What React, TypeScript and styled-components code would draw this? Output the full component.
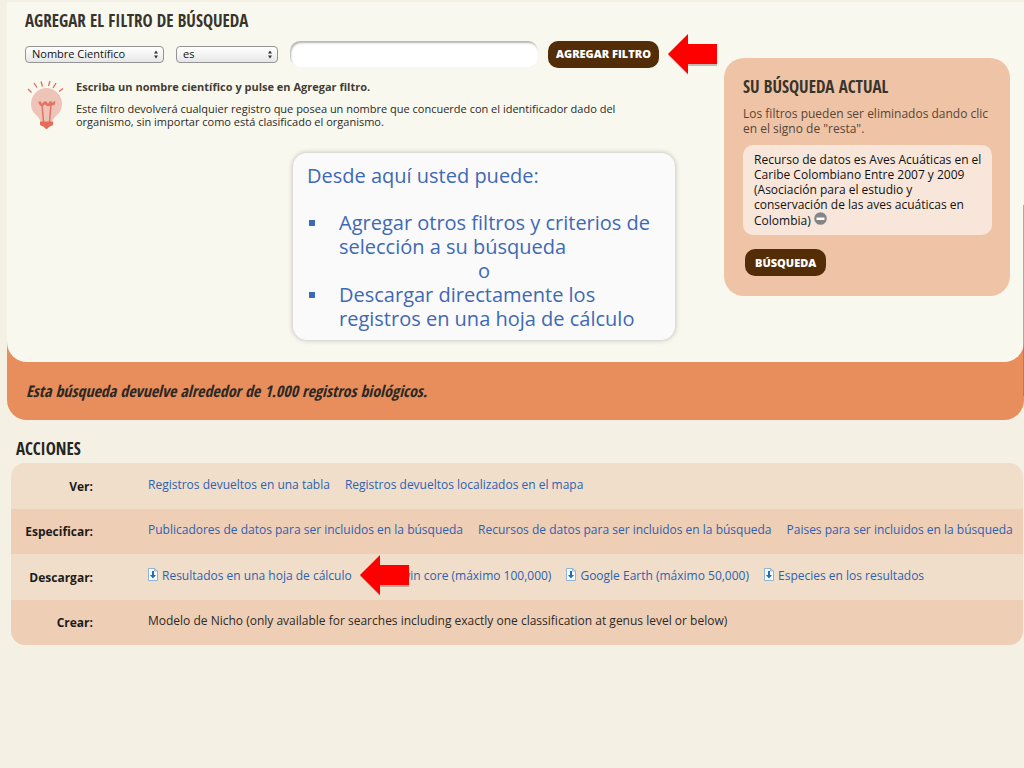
import React from 'react';
import styled, { createGlobalStyle } from 'styled-components';

const GlobalStyle = createGlobalStyle`
  * { box-sizing: border-box; }
  html { min-height: 100%; background: #f4f0e4; }
  body {
    margin: 0;
    font-family: "Open Sans", "Noto Sans", sans-serif;
    font-size: 12px;
    line-height: 15px;
    color: #2b2a26;
    overflow-x: hidden;
  }
  h1, h2, p, ul { margin: 0; padding: 0; }
`;

const condensed = `"Open Sans Condensed", "Roboto Condensed", sans-serif`;

const Page = styled.div`
  position: relative;
  padding: 2px 0 24px;
`;

const SearchBlock = styled.section`
  margin-left: 7px;
  background: #e78e5c;
  border-radius: 0 0 20px 20px;
`;

const FilterPanel = styled.div`
  display: flex;
  align-items: flex-start;
  gap: 20px;
  padding: 6px 14px 22px 18px;
  background: #f9f8ef;
  border-radius: 0 0 20px 20px;
`;

const FilterColumn = styled.div`
  flex: 1;
  min-width: 0;
`;

const Heading = styled.h2`
  font-family: ${condensed};
  font-size: 17px;
  font-weight: 300;
  line-height: 26px;
  color: #37342c;
  white-space: nowrap;
`;

const FilterForm = styled.form`
  display: flex;
  align-items: center;
  gap: 12px;
  height: 28px;
  margin-top: 6px;
`;

const SelectBox = styled.span<{ $width: number }>`
  display: grid;
  flex: none;
  align-items: center;
  width: ${(p) => p.$width}px;
  > * { grid-area: 1 / 1; }
  > svg { justify-self: end; margin-right: 5px; pointer-events: none; }
`;

const Select = styled.select`
  appearance: none;
  width: 100%;
  height: 17px;
  padding: 0 16px 0 6px;
  border: 1px solid #949494;
  border-radius: 4px;
  background: linear-gradient(#ffffff, #f4f4f4 50%, #e6e6e6);
  font: 500 11px/14px "Open Sans", sans-serif;
  color: #111;
`;

const ValueInput = styled.input`
  flex: none;
  width: 248px;
  height: 26px;
  padding: 0 10px;
  border: 0;
  border-radius: 10px;
  background: #fff;
  box-shadow: inset 1px 2px 2px #b5b5b0;
  font: inherit;
`;

const FormActions = styled.div`
  display: flex;
  flex: none;
  align-items: center;
  gap: 8px;
  margin-left: -2px;
`;

const DarkButton = styled.button`
  height: 27px;
  padding: 0 8px;
  border: 0;
  border-radius: 10px;
  background: #522d07;
  color: #fff;
  font: 800 11px/26px "Open Sans", sans-serif;
  white-space: nowrap;
`;

const Tip = styled.div`
  display: flex;
  gap: 11px;
  margin-top: 12px;
  > svg { flex: none; }
`;

const TipTitle = styled.p`
  font-size: 11px;
  font-weight: 700;
  line-height: 14px;
  color: #443d33;
`;

const TipText = styled.p`
  max-width: 560px;
  margin-top: 8px;
  font-size: 11px;
  line-height: 13px;
`;

const Callout = styled.aside`
  width: 382px;
  margin: 23px 0 0 268px;
  padding: 11px 14px 9px;
  border-radius: 14px;
  background: #fafafa;
  box-shadow: 0 0 4px 1px #c9c9c1;
  color: #3e69b4;
  font-size: 20px;
  line-height: 24px;
`;

const CalloutList = styled.ul`
  margin-top: 23px;
  list-style: none;
`;

const CalloutItem = styled.li`
  display: flex;
  align-items: flex-start;
  gap: 24px;
  &::before {
    content: "";
    flex: none;
    width: 6px;
    height: 6px;
    margin: 9px 0 0 2px;
    background: #3e69b4;
  }
`;

const CalloutOr = styled.li`
  text-align: center;
`;

const CurrentSearch = styled.aside`
  flex: none;
  width: 286px;
  margin-top: 50px;
  padding: 16px 18px 20px 19px;
  border-radius: 20px;
  background: #efc3a5;
`;

const CurrentText = styled.p`
  margin-top: 6px;
  color: #574537;
`;

const FilterChip = styled.div`
  margin-top: 9px;
  padding: 7px 8px 7px 11px;
  border-radius: 10px;
  background: #f8e6da;
  color: #111;
`;

const RemoveButton = styled.button`
  display: inline-block;
  width: 13px;
  height: 13px;
  padding: 0;
  border: 0;
  background: none;
  vertical-align: 0;
  svg { display: block; }
`;

const SearchButton = styled(DarkButton)`
  margin: 14px 0 0 2px;
  padding: 0 10px;
`;

const ResultLine = styled.p`
  padding: 14px 19px;
  font-family: ${condensed};
  font-size: 16px;
  font-weight: 300;
  font-style: italic;
  line-height: 30px;
  color: #2b2824;
`;

const ActionsHeading = styled(Heading)`
  margin: 16px 0 1px 16px;
  color: #26241f;
`;

const ActionsFrame = styled.div`
  margin: 0 1px 0 11px;
  border-radius: 14px;
  overflow: hidden;
`;

const ActionsTable = styled.table`
  width: 100%;
  border-collapse: collapse;
`;

const ActionRow = styled.tr`
  height: 46px;
  background: #f0decb;
  &:nth-child(even) { height: 45px; background: #efceb6; }
`;

const ActionName = styled.th`
  width: 82px;
  padding: 0;
  text-align: right;
  font-weight: 700;
  color: #1d1b18;
`;

const ActionCell = styled.td`
  padding: 0 0 4px 55px;
`;

const ActionLinks = styled.div`
  display: flex;
  gap: 15px;
  white-space: nowrap;
`;

const ActionItem = styled.span`
  position: relative;
  display: flex;
  gap: 3px;
  > svg { flex: none; }
`;

const Link = styled.a`
  color: #2d62ad;
  text-decoration: none;
`;

const ArrowOverlay = styled.span`
  position: absolute;
  left: 100%;
  top: -15px;
  margin-left: 7px;
  z-index: 1;
`;

const ScrollThumb = styled.div`
  position: absolute;
  top: 205px;
  right: 0;
  width: 1px;
  height: 191px;
  background: #77777799;
`;

const RedArrow = () => (
  <svg width="52" height="44" viewBox="0 0 52 44" display="block" aria-hidden="true">
    <path d="M1 23 21 4v10h29v20H21v9Z" fill="#4d2a20" opacity=".3" />
    <path d="M1 22 21 2v10h29v20H21v10Z" fill="#fe0000" />
  </svg>
);

const Stepper = () => (
  <svg width="6" height="9" viewBox="0 0 6 9" aria-hidden="true">
    <path d="M3 .5 5 3.500H1ZM3 8.500 1 5.500h4Z" fill="#333" />
  </svg>
);

const Bulb = () => (
  <svg width="40" height="50" viewBox="0 0 40 50" fill="none" aria-hidden="true">
    <path d="M6 24a15.500 16 0 1 1 31 0c0 6-3 9-6 12-2 2-3 4-4 6H16c-1-2-2-4-4-6-3-3-6-6-6-12Z" fill="#efc4b8" />
    <path d="M3 9l3.500 3.500M9 3l3 4.500M16 1.500l1.500 5M25 1l-1.500 5M31 3l-3 5M38 8.500l-4 3" stroke="#e2695a" strokeWidth="1.300" />
    <path d="M18.500 42 17 24M24.500 42 26 24" stroke="#e27264" strokeWidth="1.500" />
    <path d="M14.500 21.500q1 5 4 2.500 2-3 3 0 2 2 3 0 1-3 2 0 3 1 2.500-2.500" stroke="#e27264" strokeWidth="2.600" />
    <path d="M15 41.500h13v3.500l-4 2q-2.500 4-5 0l-4-2Z" fill="#e46c5b" />
  </svg>
);

const DownloadIcon = () => (
  <svg width="11" height="13" viewBox="0 0 11 13" aria-hidden="true">
    <path d="M.5 .5h6L9.500 3v9.500H.5Z" fill="#f8fbff" stroke="#8eb5d6" />
    <path d="M6.500 .5V3h3" fill="none" stroke="#8eb5d6" />
    <path d="M4 3h2v4H8L5 10.500 2 7h2Z" fill="#1f6fb5" />
  </svg>
);

type Action = { label: string; icon?: boolean; arrow?: boolean; plain?: boolean };

const actions: { name: string; items: Action[] }[] = [
  {
    name: 'Ver:',
    items: [{ label: 'Registros devueltos en una tabla' }, { label: 'Registros devueltos localizados en el mapa' }],
  },
  {
    name: 'Especificar:',
    items: [
      { label: 'Publicadores de datos para ser incluidos en la búsqueda' },
      { label: 'Recursos de datos para ser incluidos en la búsqueda' },
      { label: 'Paises para ser incluidos en la búsqueda' },
    ],
  },
  {
    name: 'Descargar:',
    items: [
      { label: 'Resultados en una hoja de cálculo', icon: true, arrow: true },
      { label: 'Darwin core (máximo 100,000)', icon: true },
      { label: 'Google Earth (máximo 50,000)', icon: true },
      { label: 'Especies en los resultados', icon: true },
    ],
  },
  {
    name: 'Crear:',
    items: [
      {
        label: 'Modelo de Nicho (only available for searches including exactly one classification at genus level or below)',
        plain: true,
      },
    ],
  },
];

export default function App() {
  return (
    <Page>
      <GlobalStyle />
      <SearchBlock>
        <FilterPanel>
          <FilterColumn>
            <Heading>AGREGAR EL FILTRO DE BÚSQUEDA</Heading>
            <FilterForm onSubmit={(e) => e.preventDefault()}>
              <SelectBox $width={139}>
                <Select aria-label="Campo">
                  <option>Nombre Científico</option>
                </Select>
                <Stepper />
              </SelectBox>
              <SelectBox $width={102}>
                <Select aria-label="Condición">
                  <option>es</option>
                </Select>
                <Stepper />
              </SelectBox>
              <ValueInput type="text" aria-label="Valor" />
              <FormActions>
                <DarkButton type="submit">AGREGAR FILTRO</DarkButton>
                <RedArrow />
              </FormActions>
            </FilterForm>
            <Tip>
              <Bulb />
              <div>
                <TipTitle>Escriba un nombre científico y pulse en Agregar filtro.</TipTitle>
                <TipText>
                  Este filtro devolverá cualquier registro que posea un nombre que concuerde con el identificador dado del
                  organismo, sin importar como está clasificado el organismo.
                </TipText>
              </div>
            </Tip>
            <Callout>
              <p>Desde aquí usted puede:</p>
              <CalloutList>
                <CalloutItem>Agregar otros filtros y criterios de selección a su búsqueda</CalloutItem>
                <CalloutOr>o</CalloutOr>
                <CalloutItem>Descargar directamente los registros en una hoja de cálculo</CalloutItem>
              </CalloutList>
            </Callout>
          </FilterColumn>
          <CurrentSearch>
            <Heading>SU BÚSQUEDA ACTUAL</Heading>
            <CurrentText>Los filtros pueden ser eliminados dando clic en el signo de "resta".</CurrentText>
            <FilterChip>
              Recurso de datos es Aves Acuáticas en el Caribe Colombiano Entre 2007 y 2009 (Asociación para el estudio y
              conservación de las aves acuáticas en Colombia){' '}
              <RemoveButton type="button" aria-label="Quitar filtro">
                <svg width="13" height="13" viewBox="0 0 13 13">
                  <circle cx="6.500" cy="6.500" r="6.300" fill="#858585" />
                  <path d="M2.500 5.500h8v2.500h-8Z" fill="#fff" />
                </svg>
              </RemoveButton>
            </FilterChip>
            <SearchButton type="button">BÚSQUEDA</SearchButton>
          </CurrentSearch>
        </FilterPanel>
        <ResultLine>Esta búsqueda devuelve alrededor de 1.000 registros biológicos.</ResultLine>
      </SearchBlock>
      <ActionsHeading>ACCIONES</ActionsHeading>
      <ActionsFrame>
        <ActionsTable>
          <tbody>
            {actions.map((row) => (
              <ActionRow key={row.name}>
                <ActionName scope="row">{row.name}</ActionName>
                <ActionCell>
                  <ActionLinks>
                    {row.items.map((item) => (
                      <ActionItem key={item.label}>
                        {item.icon && <DownloadIcon />}
                        {item.plain ? item.label : <Link href="#">{item.label}</Link>}
                        {item.arrow && (
                          <ArrowOverlay>
                            <RedArrow />
                          </ArrowOverlay>
                        )}
                      </ActionItem>
                    ))}
                  </ActionLinks>
                </ActionCell>
              </ActionRow>
            ))}
          </tbody>
        </ActionsTable>
      </ActionsFrame>
      <ScrollThumb />
    </Page>
  );
}
